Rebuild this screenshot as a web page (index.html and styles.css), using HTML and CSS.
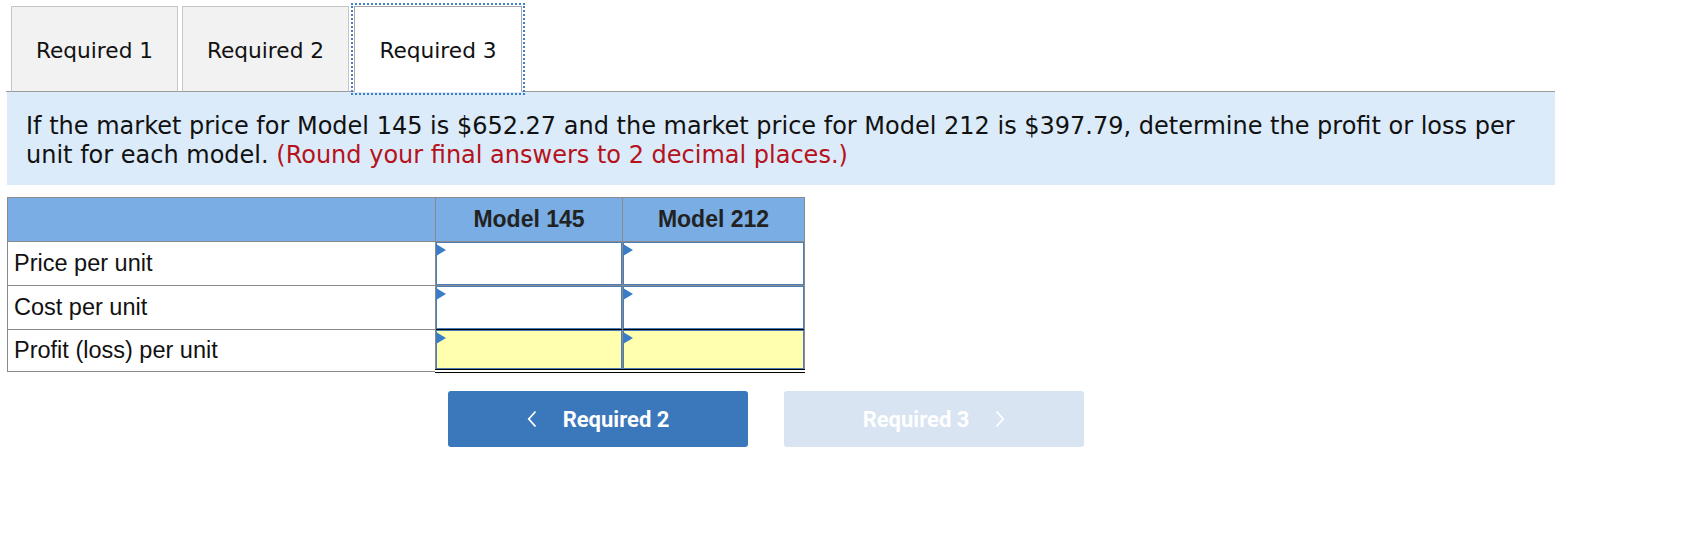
FILE: index.html
```html
<!DOCTYPE html>
<html>
<head>
<meta charset="utf-8">
<link rel="stylesheet" href="styles.css">
</head>
<body>
<div class="page">
  <div class="tabs">
    <div class="tab">Required 1</div>
    <div class="tab">Required 2</div>
    <div class="tab tab-active">Required 3</div>
  </div>
  <div class="info">If the market price for Model 145 is $652.27 and the market price for Model 212 is $397.79, determine the profit or loss per unit for each model. <span class="note">(Round your final answers to 2 decimal places.)</span></div>
  <table class="grid">
    <thead>
      <tr>
        <th class="c-label"></th>
        <th class="c-a">Model 145</th>
        <th class="c-b">Model 212</th>
      </tr>
    </thead>
    <tbody>
      <tr>
        <td class="label">Price per unit</td>
        <td class="cell"><div class="inp"><span class="flag"></span></div></td>
        <td class="cell"><div class="inp"><span class="flag"></span></div></td>
      </tr>
      <tr>
        <td class="label">Cost per unit</td>
        <td class="cell"><div class="inp"><span class="flag"></span></div></td>
        <td class="cell"><div class="inp"><span class="flag"></span></div></td>
      </tr>
      <tr class="total">
        <td class="label">Profit (loss) per unit</td>
        <td class="cell"><div class="inp inp-total"><span class="flag"></span></div></td>
        <td class="cell"><div class="inp inp-total"><span class="flag"></span></div></td>
      </tr>
    </tbody>
  </table>
  <div class="nav">
    <button class="btn btn-prev" type="button">
      <svg class="chev" width="10" height="18" viewBox="0 0 10 18"><path d="M8.5 1.5 L1.8 9 L8.5 16.5" fill="none" stroke="#fff" stroke-width="1.8"/></svg>
      <span>Required 2</span>
    </button>
    <button class="btn btn-next" type="button">
      <span>Required 3</span>
      <svg class="chev" width="10" height="18" viewBox="0 0 10 18"><path d="M1.5 1.5 L8.2 9 L1.5 16.5" fill="none" stroke="#fff" stroke-width="1.8"/></svg>
    </button>
  </div>
</div>
</body>
</html>
```
FILE: styles.css
```css
html, body {
  margin: 0;
  padding: 0;
  background: #fff;
}

.page {
  margin-left: 6px;
  padding-top: 6px;
  width: 1549px;
}

.tabs {
  display: flex;
  align-items: flex-end;
  gap: 4px;
  padding-left: 5px;
  border-bottom: 1px solid #9a9a9a;
  height: 85px;
}

.tab {
  box-sizing: border-box;
  width: 167px;
  height: 86px;
  margin-bottom: -1px;
  background: #f2f2f2;
  border: 1px solid #c6c6c6;
  border-bottom: 1px solid #9a9a9a;
  display: flex;
  align-items: center;
  justify-content: center;
  padding-top: 2px;
  font-family: "DejaVu Sans", Verdana, sans-serif;
  font-size: 21.7px;
  color: #111;
}

.tab-active {
  margin-left: 1px;
  width: 168px;
  background: #fff;
  border-color: #a8a8a8;
  border-bottom-color: #fff;
  outline: 2px dotted #3f7fcc;
  outline-offset: 1px;
}

.info {
  margin-left: 1px;
  background: #dbebf9;
  padding: 20px 19px 15px 19px;
  font-family: "DejaVu Sans", Verdana, sans-serif;
  font-size: 24px;
  line-height: 29px;
  color: #111;
}

.note {
  color: #b5121b;
}

.grid {
  margin-top: 12px;
  margin-left: 1px;
  border-collapse: collapse;
  font-family: "Liberation Sans", Arial, sans-serif;
  font-size: 23.5px;
  color: #111;
}

.grid th,
.grid td {
  border: 1px solid #8a8a8a;
  padding: 0;
}

.grid th {
  background: #79ade3;
  height: 43px;
  font-weight: bold;
  font-size: 23px;
  color: #222;
  text-align: center;
}

.c-label { width: 427px; }
.c-a { width: 186px; }
.c-b { width: 181px; }

.grid td {
  height: 43px;
}

.grid tr.total td {
  height: 39px;
}

.grid td.label {
  padding-left: 6px;
  text-align: left;
}

.grid td.cell {
  vertical-align: top;
}

.inp {
  position: relative;
  box-sizing: border-box;
  height: 43px;
  border: 1px solid #4b7eb9;
  background: #fff;
}

.inp-total {
  height: 39px;
  background: #ffffad;
  box-shadow: 0 -1px 0 #000;
}

.total td.cell {
  border-bottom: 4px double #000;
}

.flag {
  position: absolute;
  left: -1px;
  top: 1px;
  width: 0;
  height: 0;
  border-top: 6px solid transparent;
  border-bottom: 6px solid transparent;
  border-left: 10px solid #3a7cc6;
}

.nav {
  display: flex;
  gap: 36px;
  margin-top: 18px;
  padding-left: 442px;
}

.btn {
  width: 300px;
  height: 56px;
  border: none;
  border-radius: 3px;
  display: flex;
  align-items: center;
  justify-content: center;
  gap: 26px;
  font-family: Roboto, "Liberation Sans", sans-serif;
  font-weight: bold;
  font-size: 22px;
  color: #fff;
  padding: 0;
}

.btn-prev {
  background: #3a77bb;
}

.btn-next {
  background: #d8e4f2;
}

.chev {
  display: block;
}
```
